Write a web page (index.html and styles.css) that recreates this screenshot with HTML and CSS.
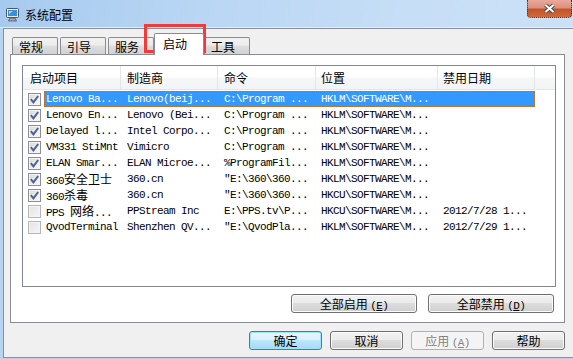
FILE: index.html
```html
<!DOCTYPE html>
<html lang="zh-CN">
  <head>
    <meta charset="utf-8">
    <title>系统配置</title>
    <link rel="stylesheet" href="styles.css">
  </head>
  <body>
    <div class="window">
      <div class="titlebar">
        <svg class="appicon" width="15" height="14" viewBox="0 0 15 14">
          <rect x="1.5" y="0.5" width="12" height="9" rx="1" fill="#e8ecf0" stroke="#4d5866"/>
          <rect x="3" y="2" width="9" height="6" fill="#3a8fd9"/>
          <path d="M4 3 L8 3 L4 6 Z" fill="#a8d6f8"/>
          <path d="M5 10 H10 L11.5 13 H3.5 Z" fill="#a0a8b2" stroke="#4d5866" stroke-width="0.8"/>
        </svg>
        <span class="title">系统配置</span>
        <div class="close">
          <svg width="13" height="11" viewBox="0 0 13 11">
            <path d="M2.5 2 L10.5 9 M10.5 2 L2.5 9" stroke="#4a4a4a" stroke-width="4"/>
            <path d="M2.5 2 L10.5 9 M10.5 2 L2.5 9" stroke="#fff" stroke-width="2"/>
          </svg>
        </div>
      </div>

      <div class="client">
        <div class="tabs">
          <div class="tab">常规</div>
          <div class="tab">引导</div>
          <div class="tab">服务</div>
          <div class="tab on">启动</div>
          <div class="tab">工具</div>
        </div>

        <div class="panel">
          <div class="list">
            <div class="head">
              <div class="hc h1">启动项目</div>
              <div class="hc h2">制造商</div>
              <div class="hc h3">命令</div>
              <div class="hc h4">位置</div>
              <div class="hc h5">禁用日期</div>
              <div class="hc h6"></div>
            </div>
            <div class="rows">
              <div class="row sel">
                <span class="cb on"><svg width="9" height="9" viewBox="0 0 9 9"><path d="M0.8 4.2 L3.4 7.4 L8.2 1" stroke="#4b6191" stroke-width="1.9" fill="none"/></svg></span>
                <div class="cells">
                  <span class="c c1">Lenovo Ba...</span>
                  <span class="c c2">Lenovo(beij...</span>
                  <span class="c c3">C:\Program ...</span>
                  <span class="c c4">HKLM\SOFTWARE\M...</span>
                  <span class="c c5"></span>
                </div>
              </div>
              <div class="row">
                <span class="cb on"><svg width="9" height="9" viewBox="0 0 9 9"><path d="M0.8 4.2 L3.4 7.4 L8.2 1" stroke="#4b6191" stroke-width="1.9" fill="none"/></svg></span>
                <div class="cells">
                  <span class="c c1">Lenovo En...</span>
                  <span class="c c2">Lenovo (Bei...</span>
                  <span class="c c3">C:\Program ...</span>
                  <span class="c c4">HKLM\SOFTWARE\M...</span>
                  <span class="c c5"></span>
                </div>
              </div>
              <div class="row">
                <span class="cb on"><svg width="9" height="9" viewBox="0 0 9 9"><path d="M0.8 4.2 L3.4 7.4 L8.2 1" stroke="#4b6191" stroke-width="1.9" fill="none"/></svg></span>
                <div class="cells">
                  <span class="c c1">Delayed l...</span>
                  <span class="c c2">Intel Corpo...</span>
                  <span class="c c3">C:\Program ...</span>
                  <span class="c c4">HKLM\SOFTWARE\M...</span>
                  <span class="c c5"></span>
                </div>
              </div>
              <div class="row">
                <span class="cb on"><svg width="9" height="9" viewBox="0 0 9 9"><path d="M0.8 4.2 L3.4 7.4 L8.2 1" stroke="#4b6191" stroke-width="1.9" fill="none"/></svg></span>
                <div class="cells">
                  <span class="c c1">VM331 StiMnt</span>
                  <span class="c c2">Vimicro</span>
                  <span class="c c3">C:\Program ...</span>
                  <span class="c c4">HKLM\SOFTWARE\M...</span>
                  <span class="c c5"></span>
                </div>
              </div>
              <div class="row">
                <span class="cb on"><svg width="9" height="9" viewBox="0 0 9 9"><path d="M0.8 4.2 L3.4 7.4 L8.2 1" stroke="#4b6191" stroke-width="1.9" fill="none"/></svg></span>
                <div class="cells">
                  <span class="c c1">ELAN Smar...</span>
                  <span class="c c2">ELAN Microe...</span>
                  <span class="c c3">%ProgramFil...</span>
                  <span class="c c4">HKLM\SOFTWARE\M...</span>
                  <span class="c c5"></span>
                </div>
              </div>
              <div class="row">
                <span class="cb on"><svg width="9" height="9" viewBox="0 0 9 9"><path d="M0.8 4.2 L3.4 7.4 L8.2 1" stroke="#4b6191" stroke-width="1.9" fill="none"/></svg></span>
                <div class="cells">
                  <span class="c c1">360<span class="cj">安全卫士</span></span>
                  <span class="c c2">360.cn</span>
                  <span class="c c3">"E:\360\360...</span>
                  <span class="c c4">HKLM\SOFTWARE\M...</span>
                  <span class="c c5"></span>
                </div>
              </div>
              <div class="row">
                <span class="cb on"><svg width="9" height="9" viewBox="0 0 9 9"><path d="M0.8 4.2 L3.4 7.4 L8.2 1" stroke="#4b6191" stroke-width="1.9" fill="none"/></svg></span>
                <div class="cells">
                  <span class="c c1">360<span class="cj">杀毒</span></span>
                  <span class="c c2">360.cn</span>
                  <span class="c c3">"E:\360\360...</span>
                  <span class="c c4">HKCU\SOFTWARE\M...</span>
                  <span class="c c5"></span>
                </div>
              </div>
              <div class="row">
                <span class="cb off"></span>
                <div class="cells">
                  <span class="c c1">PPS <span class="cj">网络</span>...</span>
                  <span class="c c2">PPStream Inc</span>
                  <span class="c c3">E:\PPS.tv\P...</span>
                  <span class="c c4">HKCU\SOFTWARE\M...</span>
                  <span class="c c5">2012/7/28 1...</span>
                </div>
              </div>
              <div class="row">
                <span class="cb off"></span>
                <div class="cells">
                  <span class="c c1">QvodTerminal</span>
                  <span class="c c2">Shenzhen QV...</span>
                  <span class="c c3">"E:\QvodPla...</span>
                  <span class="c c4">HKLM\SOFTWARE\M...</span>
                  <span class="c c5">2012/7/29 1...</span>
                </div>
              </div>
            </div>
          </div>

          <div class="panelbtns">
            <div class="btn wide">全部启用 <span class="mn">(<u>E</u>)</span></div>
            <div class="btn wide">全部禁用 <span class="mn">(<u>D</u>)</span></div>
          </div>
        </div>

        <div class="dlgbtns">
          <div class="btn def">确定</div>
          <div class="btn">取消</div>
          <div class="btn dis">应用 <span class="mn">(<u>A</u>)</span></div>
          <div class="btn">帮助</div>
        </div>
      </div>

      <div class="mark"></div>
    </div>
  </body>
</html>
```

FILE: styles.css
```css
*{
    margin: 0;
    padding: 0;
    box-sizing: border-box;
}
body{
    width: 573px;
    height: 359px;
    overflow: hidden;
    background: #b9d4f0;
    font-family: "Noto Sans CJK SC", sans-serif;
    font-size: 12px;
    color: #000;
}
.window{
    position: relative;
    width: 573px;
    height: 359px;
}

/* title bar */
.titlebar{
    height: 28px;
    display: flex;
    align-items: center;
    background: linear-gradient(100deg, #a6caef 0%, #b9d6f4 35%, #c6def6 70%, #cbe1f7 100%);
    box-shadow: inset 0 -1px #e4eefa;
}
.appicon{
    margin-left: 5px;
    margin-top: 1px;
}
.title{
    margin-left: 5px;
    line-height: 14px;
    margin-top: 1px;
}
.close{
    margin-left: auto;
    margin-right: 1px;
    align-self: flex-start;
    width: 45px;
    height: 18px;
    display: flex;
    align-items: center;
    justify-content: center;
    border: 1px dotted #333;
    border-top: none;
    border-radius: 0 0 4px 4px;
    background: linear-gradient(#eaaa9b 0%, #dc907e 45%, #c4542a 55%, #cd6a3c 100%);
}

/* dialog body */
.client{
    margin-left: 3px;
    height: 330px;
    border: 1px solid #8a8f99;
    border-right: none;
    background: #f0f0f0;
    padding: 4px 8px 0 6px;
}
.tabs{
    display: flex;
    align-items: flex-end;
    height: 21px;
    padding-left: 2px;
}
.tab{
    width: 46px;
    height: 17px;
    margin-right: 2px;
    padding: 2px 0 0 6px;
    line-height: 14px;
    border: 1px solid #898c95;
    border-bottom: none;
    border-radius: 2px 2px 0 0;
    background: linear-gradient(#f3f3f3, #ebebeb 45%, #dddddd 50%, #d2d2d2);
}
.tab.on{
    position: relative;
    z-index: 1;
    width: 50px;
    height: 22px;
    margin: 0 0 -1px -2px;
    padding: 3px 0 0 8px;
    background: #fff;
}
.panel{
    height: 269px;
    border: 1px solid #898c95;
    background: #fff;
    padding: 10px 8px 0 11px;
}
.list{
    height: 222px;
    border: 1px solid #828790;
}
.head{
    display: flex;
    height: 24px;
    border-bottom: 1px solid #e5e5e5;
    background: linear-gradient(#fff 45%, #f5f6f7 55%, #f3f4f6);
}
.hc{
    padding-left: 6px;
    line-height: 23px;
    border-right: 1px solid #e3e5e7;
}
.h1{ width: 98px; padding-left: 7px; }
.h2{ width: 97px; }
.h3{ width: 98px; }
.h4{ width: 122px; padding-left: 5px; }
.h5{ width: 97px; padding-left: 5px; }
.h6{ flex: 1; border-right: none; }

.rows{
    padding-top: 1px;
}
.row{
    display: flex;
    align-items: center;
    height: 16px;
}
.cb{
    width: 13px;
    height: 13px;
    margin: 0 3px 0 5px;
    display: flex;
    align-items: center;
    justify-content: center;
    border: 1px solid #8e8f8f;
    background: linear-gradient(135deg, #d6d8db, #fbfbfb);
    box-shadow: inset 0 0 0 1px #f4f4f4;
}
.cb.off{
    border-color: #b4b6ba;
    background: linear-gradient(135deg, #e1e2e3, #f7f7f7);
}
.cells{
    display: flex;
    width: 491px;
    height: 16px;
}
.sel .cells{
    background: #3399ff;
    color: #fff;
    outline: 1px dotted #b8742e;
    outline-offset: -1px;
}
.c{
    font-family: "Liberation Mono", "Noto Sans CJK SC", monospace;
    font-size: 11px;
    letter-spacing: -0.6px;
    line-height: 16px;
    white-space: nowrap;
    overflow: hidden;
    padding-left: 6px;
}
.c1{ width: 77px; padding-left: 2px; }
.c2{ width: 97px; }
.c3{ width: 98px; }
.c4{ width: 122px; padding-left: 5px; }
.c5{ width: 97px; padding-left: 5px; }
.cj{
    font-family: "Noto Sans CJK SC", sans-serif;
    font-size: 12px;
    letter-spacing: 0;
    line-height: 16px;
}

/* buttons */
.panelbtns{
    display: flex;
    justify-content: flex-end;
    gap: 11px;
    margin-top: 7px;
    padding-right: 2px;
}
.dlgbtns{
    display: flex;
    justify-content: flex-end;
    gap: 8px;
    margin-top: 8px;
}
.btn{
    width: 73px;
    height: 19px;
    line-height: 17px;
    text-align: center;
    border: 1px solid #707070;
    border-radius: 3px;
    background: linear-gradient(#f2f2f2, #ebebeb 49%, #dddddd 50%, #cfcfcf);
    box-shadow: inset 0 0 0 1px #fbfbfb;
}
.btn.wide{
    width: 126px;
}
.btn.def{
    border-color: #3c7fb1;
    background: linear-gradient(#eaf6fd, #d9f0fc 49%, #bee6fd 50%, #a7d9f5);
    box-shadow: inset 0 0 0 1px #9ee3fb;
}
.btn.dis{
    border-color: #adb2b5;
    background: #f4f4f4;
    box-shadow: none;
    color: #838383;
}
.mn{
    font-family: "Liberation Mono", monospace;
    font-size: 11px;
    letter-spacing: -0.6px;
}

/* red annotation box */
.mark{
    position: absolute;
    left: 144px;
    top: 24px;
    width: 62px;
    height: 29px;
    border: 3px solid #f23a3a;
}
```
